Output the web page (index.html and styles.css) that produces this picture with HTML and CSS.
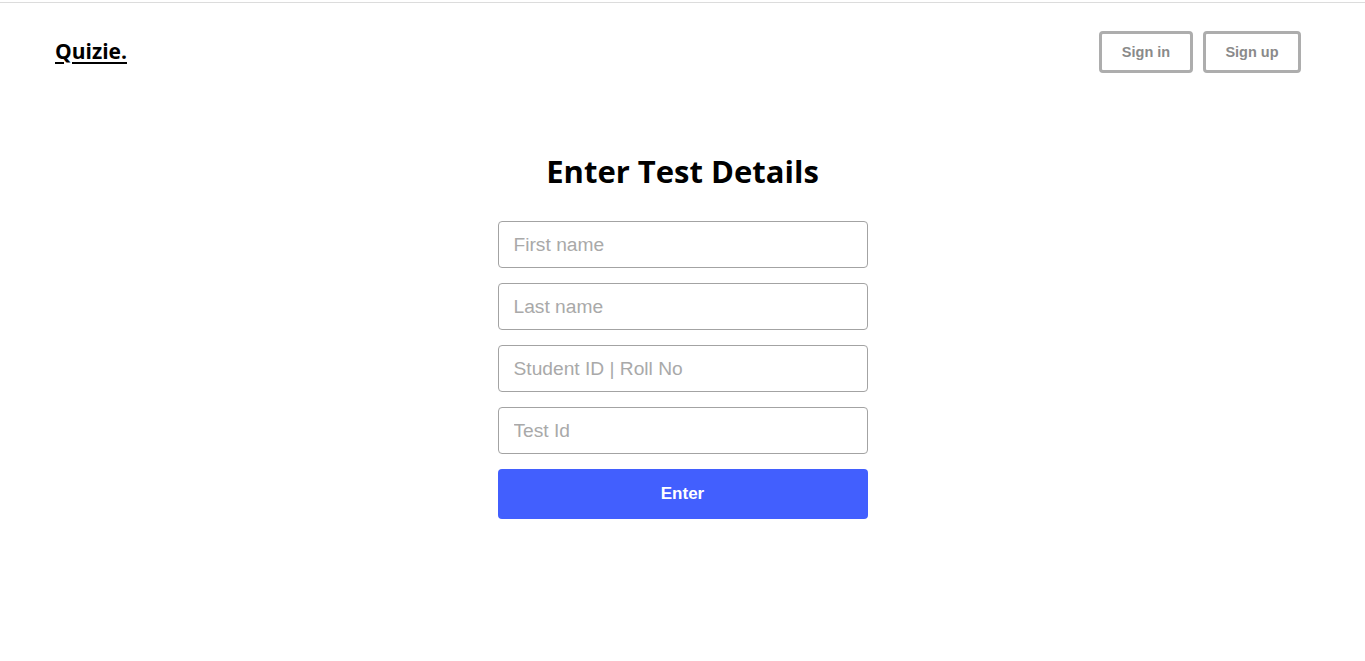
FILE: index.html
```html
<!DOCTYPE html>
<html>
<head>
<meta charset="utf-8">
<link rel="stylesheet" href="styles.css">
</head>
<body>
<div class="page">
  <header class="header">
    <a class="logo" href="#">Quizie.</a>
    <div class="auth">
      <button class="auth-btn">Sign in</button>
      <button class="auth-btn">Sign up</button>
    </div>
  </header>
  <main class="main">
    <h1 class="title">Enter Test Details</h1>
    <form class="form">
      <input class="field" type="text" placeholder="First name">
      <input class="field" type="text" placeholder="Last name">
      <input class="field" type="text" placeholder="Student ID | Roll No">
      <input class="field" type="text" placeholder="Test Id">
      <button class="submit" type="button">Enter</button>
    </form>
  </main>
</div>
</body>
</html>
```
FILE: styles.css
```css
html, body {
  margin: 0;
  padding: 0;
  background: #fff;
}
.page {
  border-top: 1px solid #dcdcdc;
  margin-top: 2px;
  min-height: 658px;
  font-family: "Liberation Sans", Arial, sans-serif;
}
.header {
  display: flex;
  justify-content: space-between;
  align-items: center;
  padding: 28px 64px 0 55px;
  height: 42px;
}
.logo {
  font-family: "Open Sans", "Noto Sans", sans-serif;
  font-weight: 700;
  font-size: 21px;
  line-height: 26px;
  margin-top: -2px;
  color: #000;
  text-decoration: underline;
  text-underline-offset: 3px;
  text-decoration-thickness: 2px;
}
.auth {
  display: flex;
  gap: 10px;
}
.auth-btn {
  height: 42px;
  width: 94px;
  padding: 0 0 1px;
  background: #fff;
  border: 3px solid #adadad;
  border-radius: 4px;
  font-family: "Liberation Sans", Arial, sans-serif;
  font-weight: 700;
  font-size: 14.5px;
  color: #8a8a8a;
}
.auth-btn + .auth-btn {
  width: 98px;
}
.main {
  display: flex;
  flex-direction: column;
  align-items: center;
}
.title {
  margin: 76px 0 28px;
  font-family: "Open Sans", "Noto Sans", sans-serif;
  font-weight: 700;
  font-size: 31px;
  line-height: 44px;
  color: #000;
}
.form {
  display: flex;
  flex-direction: column;
  gap: 15px;
  width: 370px;
}
.field {
  box-sizing: border-box;
  height: 47px;
  width: 100%;
  padding: 0 15px;
  border: 1px solid #a3a3a3;
  border-radius: 4px;
  font-family: "Liberation Sans", Arial, sans-serif;
  font-size: 19.2px;
  color: #333;
}
.field::placeholder {
  color: #a9a9a9;
}
.submit {
  height: 50px;
  width: 100%;
  border: none;
  border-radius: 4px;
  background: #425ffe;
  color: #fff;
  font-family: "Liberation Sans", Arial, sans-serif;
  font-weight: 700;
  font-size: 17px;
}
```
